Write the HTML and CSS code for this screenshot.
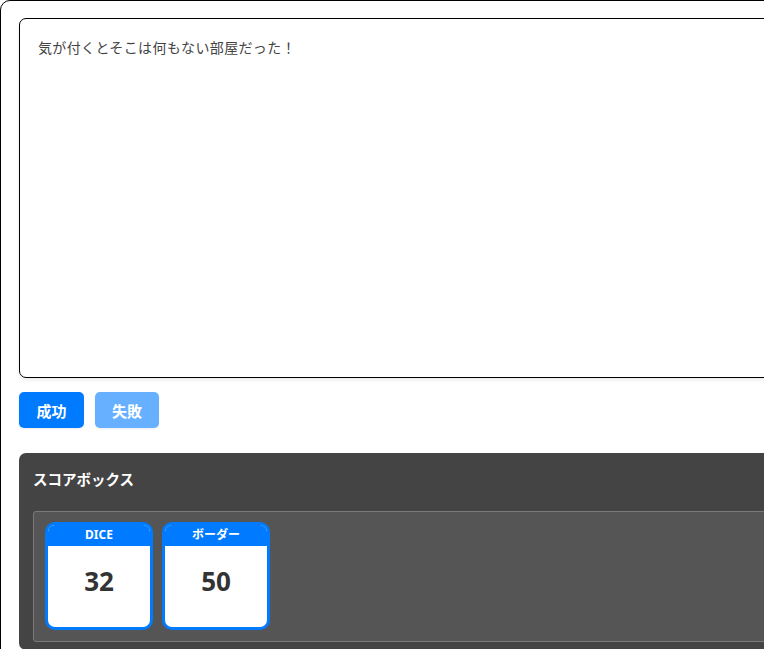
FILE: index.html
```html
<!DOCTYPE html>
<html lang="ja">
<head>
<meta charset="utf-8">
<title>Scene</title>
<link rel="stylesheet" href="styles.css">
</head>
<body>
<div class="container">
  <div class="message">気が付くとそこは何もない部屋だった！</div>
  <div class="actions">
    <button class="btn btn-primary">成功</button>
    <button class="btn btn-primary disabled">失敗</button>
  </div>
  <section class="panel">
    <h2 class="panel-title">スコアボックス</h2>
    <div class="score-area">
      <div class="score-card">
        <div class="score-head">DICE</div>
        <div class="score-body">32</div>
      </div>
      <div class="score-card">
        <div class="score-head">ボーダー</div>
        <div class="score-body">50</div>
      </div>
    </div>
  </section>
</div>
</body>
</html>
```
FILE: styles.css
```css
html, body {
  margin: 0;
  padding: 0;
  overflow: hidden;
  background: #fff;
}
body {
  font-family: "Noto Sans", "Noto Sans CJK JP", sans-serif;
}
.container {
  width: 900px;
  border: 1px solid #000;
  border-radius: 10px;
  padding: 17px 18px 18px 18px;
}
.message {
  height: 340px;
  border: 1px solid #000;
  border-radius: 7px;
  padding: 18px 18px 0 18px;
  font-size: 14px;
  line-height: 22px;
  letter-spacing: 0.35px;
  color: #444;
  box-shadow: 0 2px 4px rgba(0,0,0,0.08);
}
.actions {
  display: flex;
  gap: 11px;
  margin-top: 14px;
}
.btn {
  height: 36px;
  width: 65px;
  padding: 0;
  border: none;
  border-radius: 5px;
  font-family: "Noto Sans CJK JP", sans-serif;
  font-size: 15px;
  font-weight: 700;
  color: #fff;
  box-shadow: 0 1px 2px rgba(0,0,0,0.08);
}
.btn-primary { background: #007bff; }
.btn-primary.disabled { background: #66b0ff; width: 64px; }
.panel {
  margin-top: 25px;
  background: #444;
  border-radius: 7px;
  padding: 14px 14px 8px 14px;
}
.panel-title {
  margin: 0 0 20px 0;
  font-family: "Noto Sans CJK JP", sans-serif;
  font-size: 14.5px;
  line-height: 24px;
  font-weight: 700;
  color: #fff;
}
.score-area {
  display: flex;
  gap: 9px;
  background: #555;
  border: 1px solid #7a7a7a;
  border-radius: 3px;
  padding: 10px 11px 11px 11px;
}
.score-card {
  width: 102px;
  height: 102px;
  border: 3px solid #007bff;
  border-radius: 10px;
  overflow: hidden;
  background: #fff;
  display: flex;
  flex-direction: column;
}
.score-head {
  height: 21px;
  background: #007bff;
  color: #fff;
  font-family: "Noto Sans", "Noto Sans CJK JP", sans-serif;
  font-size: 12px;
  font-weight: 700;
  line-height: 19px;
  text-align: center;
}
.score-body {
  flex: 1;
  display: flex;
  align-items: center;
  justify-content: center;
  padding-bottom: 12px;
  font-family: "Open Sans", "Noto Sans", sans-serif;
  font-size: 26px;
  font-weight: 700;
  color: #333;
}
```
